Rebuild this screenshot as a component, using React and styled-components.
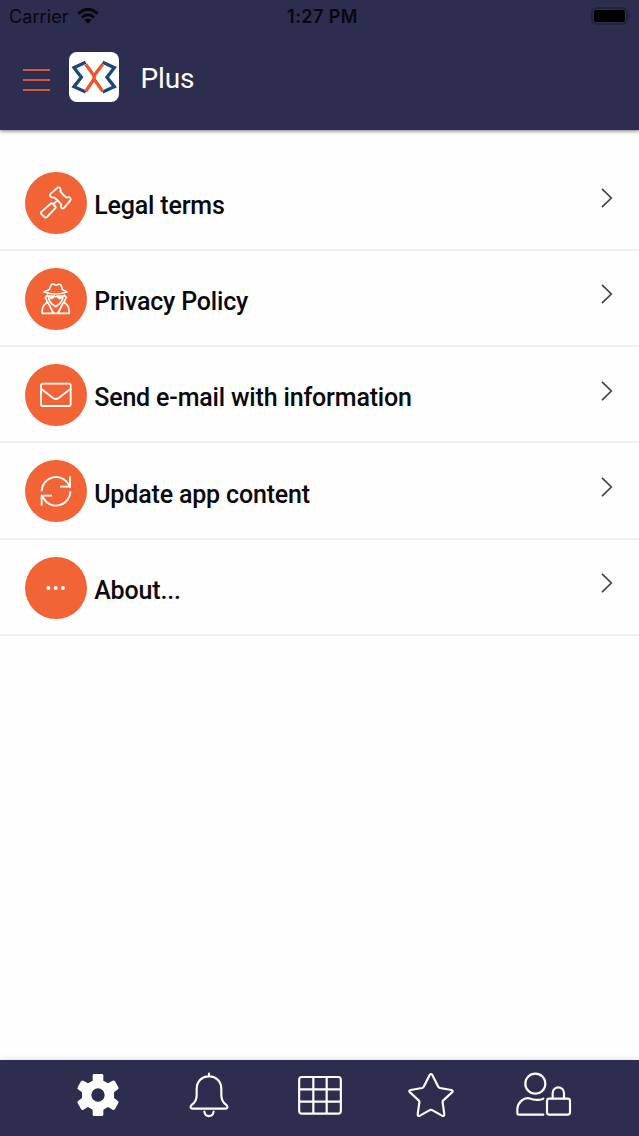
import React, { useState } from "react";
import styled, { createGlobalStyle } from "styled-components";

const GlobalStyle = createGlobalStyle`
  * {
    box-sizing: border-box;
  }
  body {
    margin: 0;
    background-color: #fefefe;
    font-family: Roboto, sans-serif;
  }
  svg {
    display: block;
  }
`;

const Screen = styled.div`
  width: 100%;
  height: 100vh;
  display: flex;
  flex-direction: column;
  overflow: hidden;
  background-color: #fefefe;
`;

const Header = styled.header`
  height: 129.5px;
  flex: none;
  background-color: #2d2d4f;
  box-shadow: 0 1px 4px rgba(0, 0, 0, 0.55);
`;

const StatusBar = styled.div`
  height: 32px;
  padding: 0 8px 0 9px;
  display: grid;
  grid-template-columns: 1fr auto 1fr;
  align-items: center;
  font-family: Inter, sans-serif;
  font-size: 18px;
  color: #07070f;
`;

const Carrier = styled.div`
  display: flex;
  align-items: center;
  gap: 8px;
  letter-spacing: 0.1px;
`;

const Time = styled.div`
  padding-left: 5px;
  font-size: 18px;
  font-weight: 600;
  letter-spacing: 0.45px;
`;

const Battery = styled.div`
  justify-self: end;
  margin-top: -1px;
`;

const TitleBar = styled.div`
  height: 90px;
  padding-left: 23px;
  display: flex;
  align-items: center;
`;

const MenuButton = styled.button`
  width: 27px;
  padding: 0;
  border: none;
  background: none;
  display: flex;
  flex-direction: column;
  gap: 8px;
  margin-top: 5px;
`;

const MenuLine = styled.span`
  width: 27px;
  height: 2px;
  background-color: #d0593e;
`;

const Logo = styled.div`
  width: 50px;
  height: 50px;
  margin-left: 19px;
  border-radius: 8px;
  background-color: white;
`;

const Title = styled.h1`
  margin: 2px 0 0 21.5px;
  font-size: 28px;
  font-weight: 400;
  letter-spacing: -0.1px;
  color: white;
`;

const List = styled.ul`
  flex: 1;
  margin: 0;
  padding: 25px 0 0;
  list-style: none;
`;

const Row = styled.li`
  height: 96.25px;
  padding: 2px 25px 0 24.5px;
  display: flex;
  align-items: center;
  border-bottom: 2px solid #eeeff0;
`;

const Circle = styled.div`
  width: 62px;
  height: 62px;
  border-radius: 50%;
  background-color: #f26336;
`;

const Label = styled.span`
  flex: 1;
  margin: 5.5px 0 0 7.7px;
  font-size: 25px;
  font-weight: 500;
  letter-spacing: -0.17px;
  color: #08080a;
`;

const Arrow = styled.div`
  margin-top: -9px;
`;

const TabBar = styled.nav`
  height: 76px;
  flex: none;
  padding: 0 42px 6px;
  display: grid;
  grid-template-columns: repeat(5, 1fr);
  align-items: center;
  justify-items: center;
  background-color: #2d2d4f;
  box-shadow: 0 -1px 5px rgba(0, 0, 0, 0.12);
`;

const Tab = styled.button`
  padding: 0;
  border: none;
  background: none;

  &:last-child {
    margin-left: 4px;
  }
`;

const WifiIcon = () => (
  <svg width="22" height="17" viewBox="0 0 22 17" fill="none">
    <path d="M1.5 5.8C7-.1 15-.1 20.5 5.8M5 9.5c3.8-3.8 8.2-3.8 12 0" stroke="#07070f" strokeWidth="3" />
    <path d="M7.3 12c2.2-1.8 5.2-1.8 7.4 0L11 15.7z" fill="#07070f" />
  </svg>
);

const BatteryIcon = () => (
  <svg width="40" height="18" viewBox="0 0 40 18">
    <rect x="1" y="1" width="35" height="16" rx="4.5" fill="none" stroke="#20203a" strokeWidth="1.4" />
    <rect x="3" y="3" width="31" height="12" rx="2.5" fill="#000003" />
    <path d="M37.8 6.5c2 1 2 4 0 5z" fill="#20203a" />
  </svg>
);

const LogoIcon = () => (
  <svg width="50" height="50" viewBox="0 0 150 150" fill="none" strokeWidth="10">
    <g stroke="#1d4775">
      <path d="M50 31L15 47L37 76L15 104L50 120" />
      <path d="M101 31L136 47L114 76L136 104L101 120" />
    </g>
    <g stroke="#ef552b">
      <path d="M50 37L75 71L101 37" />
      <path d="M50 118L75 81L101 118" />
      <path d="M75.500 68v16" />
    </g>
  </svg>
);

const ChevronIcon = () => (
  <svg width="14" height="22" viewBox="0 0 14 22" fill="none" stroke="#45464b" strokeWidth="1.7">
    <path d="M2 1.8L11.3 11L2 20.2" />
  </svg>
);

const icons = {
  legal: (
    <>
      <path d="M76 73q-3-4 1-8l20-17q6-4 9 1q2 3 0 9q9 12 19 19q7-3 10 0q4 4 1 8l-18 22q-5 5-9 0q-3-4 0-9q-9-13-20-21q-8 1-13-4z" />
      <path d="M95 87l-11 11M76 96q4-4 8 0l6 6q4 4 0 8l-23 24q-4 5-9 1l-8-8q-4-4 0-8z" />
    </>
  ),
  privacy: (
    <>
      <path d="M72 66l6-14q4-7 11-2q4 2 9 0q7-4 11 4l4 12M72 66q-12 2-15 6q34 12 69 0q-4-4-13-6" strokeWidth="5" />
      <path d="M69 82q4 26 23 33q19-7 23-33M69 80l-8 8 6 14-8 8q-8 6-8 26h82q0-20-8-26l-8-8 7-14-8-8M68 102l17 33M116 102l-17 33M87 115h10" strokeWidth="5" />
      <path d="M70 82h19l3 3 4-3h18q-2 13-12 12l-7-6h-6l-7 6q-10 0-12-12z" fill="white" stroke="none" />
    </>
  ),
  mail: (
    <>
      <rect x="48" y="59" width="89" height="67" rx="6" />
      <path d="M49 75l35 27q9 6 17 0l35-27" />
    </>
  ),
  update: (
    <>
      <path d="M50 94a43 43 0 0 1 82-18l4 8M135 49v31h-30" strokeLinejoin="miter" />
      <path d="M136 94a43 43 0 0 1-81 20l-5-9M50 137v-30h31" strokeLinejoin="miter" />
    </>
  ),
  about: (
    <g fill="white" stroke="none">
      <circle cx="70" cy="93" r="6" />
      <circle cx="92" cy="93" r="6" />
      <circle cx="114" cy="93" r="6" />
    </g>
  ),
};

const tabs = [
  {
    name: "Settings",
    icon: (
      <svg width="44" height="46" viewBox="0 0 132 138">
        <path
          d="M50 10q0-4 5-4h22q5 0 5 4v16l14 8 14-8q4-2 7 2l10 18q2 4-1 6l-12 9v17l12 9q3 2 1 6l-10 18q-3 4-7 2l-14-8-14 8v15q0 4-5 4H55q-5 0-5-4v-15l-14-8-14 8q-4 2-7-2L5 93q-2-4 1-6l12-9V61L6 52q-3-2-1-6l10-18q3-4 7-2l14 8 14-8zM66 49a20 20 0 1 0 0 40a20 20 0 1 0 0-40z"
          fill="white"
          fillRule="evenodd"
        />
      </svg>
    ),
  },
  {
    name: "Notifications",
    icon: (
      <svg width="44" height="46" viewBox="0 0 132 138" fill="none" stroke="white" strokeWidth="6.5" strokeLinecap="round">
        <path d="M66 5v8M66 13c-23 0-37 17-37 39v17c0 14-4 22-14 29-7 6-5 12 2 12h98c7 0 9-6 2-12-10-7-14-15-14-29V52c0-22-14-39-37-39z" />
        <path d="M52 119c3 18 25 18 28 0" />
      </svg>
    ),
  },
  {
    name: "Agenda",
    icon: (
      <svg width="44" height="46" viewBox="0 0 132 138" fill="none" stroke="white" strokeWidth="6.5">
        <rect x="3.5" y="15" width="125" height="110" rx="8" />
        <path d="M3 52h126M3 89h126M46 15v109M86 15v109" />
      </svg>
    ),
  },
  {
    name: "Favourites",
    icon: (
      <svg width="46" height="46" viewBox="0 0 138 138" fill="none" stroke="white" strokeWidth="6.5" strokeLinejoin="round">
        <path d="M65 9q4-6 8 0l17 34q2 4 6 5l34 6q7 2 2 7l-26 24q-3 3-2 7l5 35q0 7-7 4l-28-16q-5-3-10 0l-28 16q-7 3-7-4l5-35q1-4-2-7L6 61q-5-5 2-7l34-6q4-1 6-5z" />
      </svg>
    ),
  },
  {
    name: "Account",
    icon: (
      <svg width="56" height="46" viewBox="0 0 168 138" fill="none" stroke="white" strokeWidth="6.5" strokeLinecap="round">
        <circle cx="58" cy="35" r="30" />
        <path d="M82 80q-19 8-43-1c-15-3-33 11-35 31v14q0 4 5 4h73" />
        <rect x="93" y="80" width="69" height="48" rx="7" />
        <path d="M110 79V63a17 17 0 0 1 34 0v16" />
      </svg>
    ),
  },
];

const items = [
  { icon: "legal", label: "Legal terms" },
  { icon: "privacy", label: "Privacy Policy" },
  { icon: "mail", label: "Send e-mail with information" },
  { icon: "update", label: "Update app content" },
  { icon: "about", label: "About..." },
];

function App() {
  const [activeTab, setActiveTab] = useState("Settings");

  return (
    <Screen>
      <GlobalStyle />
      <Header>
        <StatusBar>
          <Carrier>
            Carrier
            <WifiIcon />
          </Carrier>
          <Time>1:27 PM</Time>
          <Battery>
            <BatteryIcon />
          </Battery>
        </StatusBar>
        <TitleBar>
          <MenuButton aria-label="Menu">
            <MenuLine />
            <MenuLine />
            <MenuLine />
          </MenuButton>
          <Logo>
            <LogoIcon />
          </Logo>
          <Title>Plus</Title>
        </TitleBar>
      </Header>
      <List>
        {items.map((item) => (
          <Row key={item.icon}>
            <Circle>
              <svg width="62" height="62" viewBox="0 0 186 186" fill="none" stroke="white" strokeWidth="5.5" strokeLinejoin="round">
                {icons[item.icon]}
              </svg>
            </Circle>
            <Label>{item.label}</Label>
            <Arrow>
              <ChevronIcon />
            </Arrow>
          </Row>
        ))}
      </List>
      <TabBar>
        {tabs.map((tab) => (
          <Tab
            key={tab.name}
            aria-label={tab.name}
            aria-pressed={activeTab === tab.name}
            onClick={() => setActiveTab(tab.name)}
          >
            {tab.icon}
          </Tab>
        ))}
      </TabBar>
    </Screen>
  );
}

export default App;
